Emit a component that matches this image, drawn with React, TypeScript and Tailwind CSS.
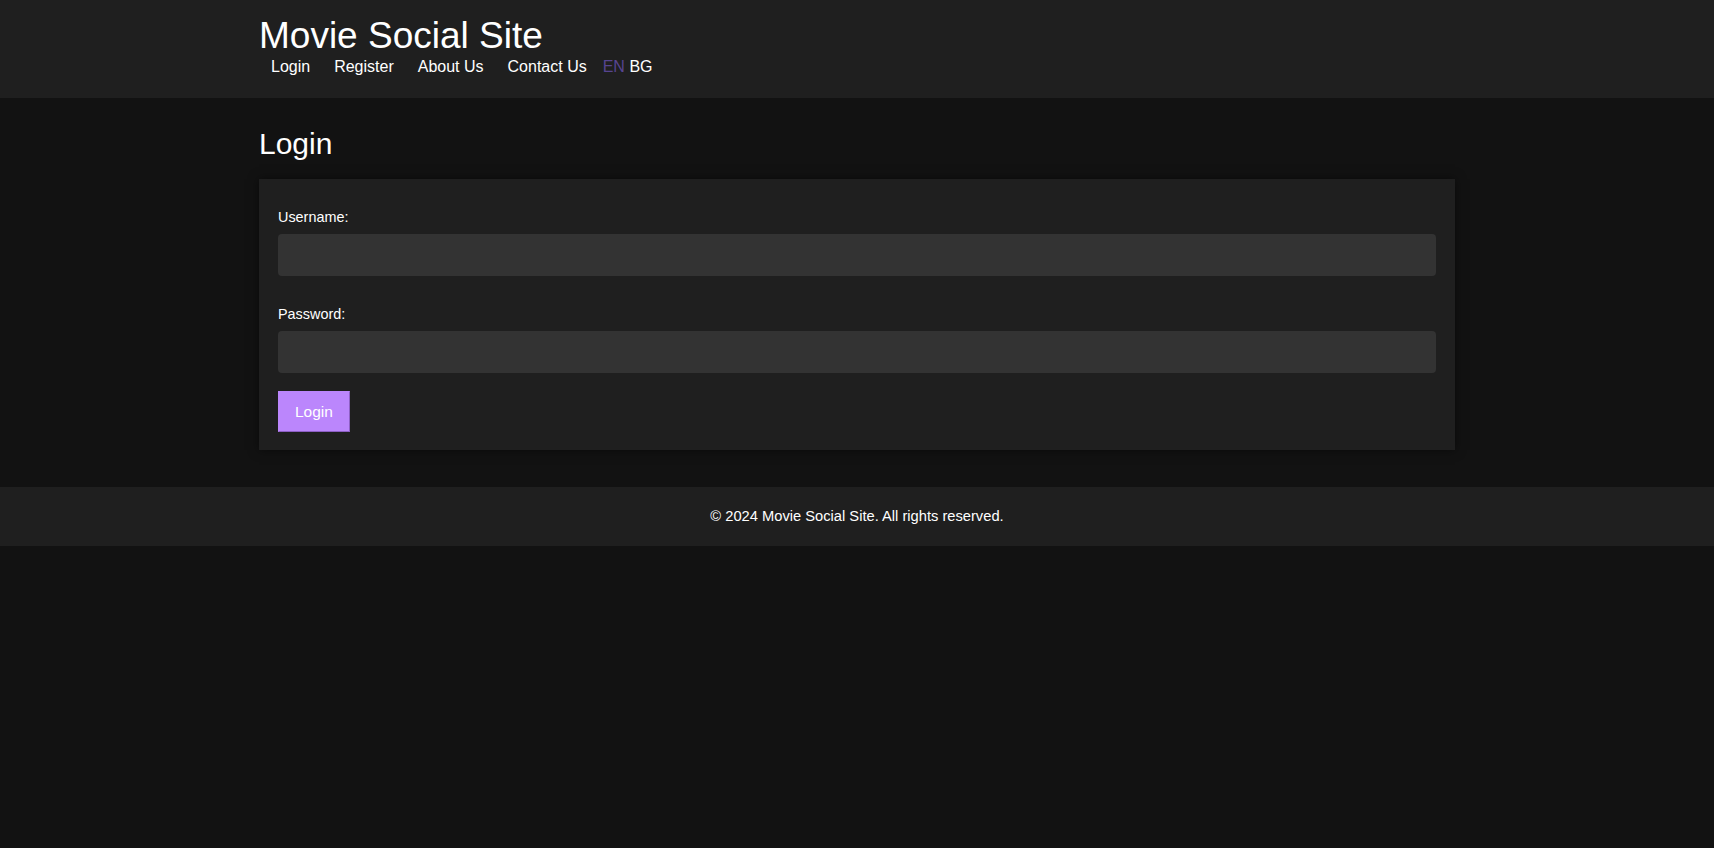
export default function App() {
  return (
    <div className="min-h-screen bg-[#121212] text-white font-['Liberation_Sans',Arial,sans-serif]">
      {/* Header */}
      <header className="bg-[#1f1f1f] pt-[15px] pb-[22px]">
        <div className="w-[1196px] mx-auto">
          <h1 className="text-[37px] leading-[41px] font-normal text-white">Movie Social Site</h1>
          <nav className="mt-[2px] flex items-center text-[16px] leading-[18px]">
            <a href="#" className="px-3 text-white">Login</a>
            <a href="#" className="px-3 text-white">Register</a>
            <a href="#" className="px-3 text-white">About Us</a>
            <a href="#" className="px-3 text-white">Contact Us</a>
            <span className="ml-1">
              <a href="#" className="text-[#574490]">EN</a>{" "}
              <a href="#" className="text-white">BG</a>
            </span>
          </nav>
        </div>
      </header>

      {/* Main */}
      <main className="pt-[29px] pb-[37px]">
        <div className="w-[1196px] mx-auto">
          <h2 className="text-[30px] leading-[34px] font-normal text-white mb-[18px]">Login</h2>

          <form className="bg-[#1f1f1f] shadow-[0_0_10px_rgba(0,0,0,0.5)] px-[19px] pt-[29px] pb-[18px]">
            <div>
              <label className="block text-[14.4px] leading-[18px] text-white">Username:</label>
              <input
                type="text"
                className="mt-2 block w-full h-[42px] rounded-[4px] bg-[#333333] text-white px-3 outline-none"
              />
            </div>
            <div className="mt-[29px]">
              <label className="block text-[14.4px] leading-[18px] text-white">Password:</label>
              <input
                type="password"
                className="mt-2 block w-full h-[42px] rounded-[4px] bg-[#333333] text-white px-3 outline-none"
              />
            </div>
            <button
              type="button"
              className="mt-[18px] block h-[41px] px-4 bg-[#bb86fc] border border-[#bb86fc] border-r-[#8d5fc4] border-b-[#8d5fc4] text-white text-[15.5px] leading-[18px]"
            >
              Login
            </button>
          </form>
        </div>
      </main>

      {/* Footer */}
      <footer className="bg-[#1f1f1f] py-[21px] text-center text-[14.7px] leading-[17px] text-white">
        © 2024 Movie Social Site. All rights reserved.
      </footer>
    </div>
  )
}
